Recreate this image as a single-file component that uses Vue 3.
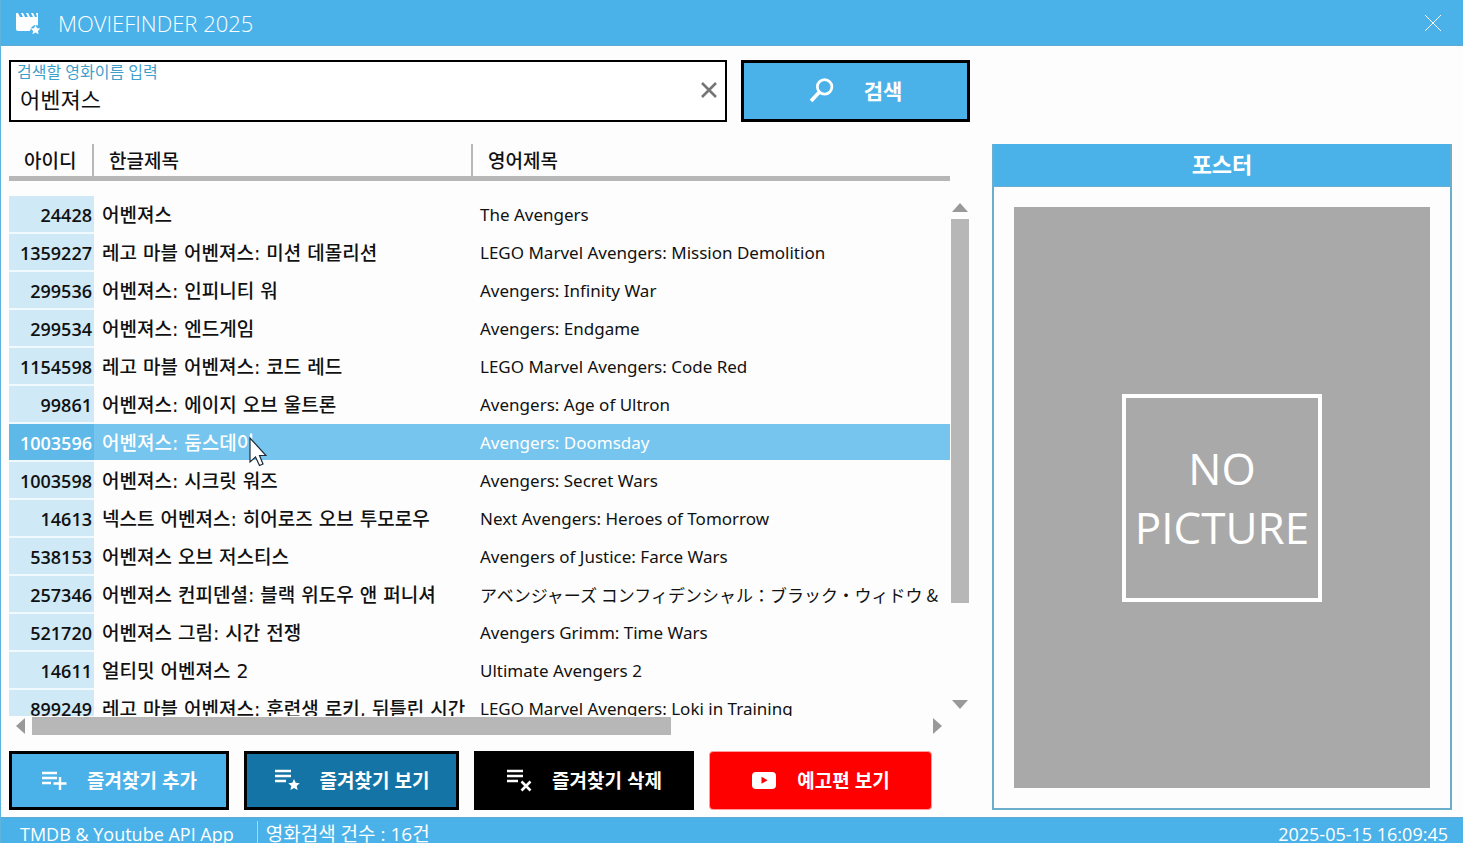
<script setup>
import { ref } from 'vue'

const query = ref('어벤져스')
const selected = ref(1003596)
const movies = [
  { id: 24428, ko: '어벤져스', en: 'The Avengers' },
  { id: 1359227, ko: '레고 마블 어벤져스: 미션 데몰리션', en: 'LEGO Marvel Avengers: Mission Demolition' },
  { id: 299536, ko: '어벤져스: 인피니티 워', en: 'Avengers: Infinity War' },
  { id: 299534, ko: '어벤져스: 엔드게임', en: 'Avengers: Endgame' },
  { id: 1154598, ko: '레고 마블 어벤져스: 코드 레드', en: 'LEGO Marvel Avengers: Code Red' },
  { id: 99861, ko: '어벤져스: 에이지 오브 울트론', en: 'Avengers: Age of Ultron' },
  { id: 1003596, ko: '어벤져스: 둠스데이', en: 'Avengers: Doomsday' },
  { id: 1003598, ko: '어벤져스: 시크릿 워즈', en: 'Avengers: Secret Wars' },
  { id: 14613, ko: '넥스트 어벤져스: 히어로즈 오브 투모로우', en: 'Next Avengers: Heroes of Tomorrow' },
  { id: 538153, ko: '어벤져스 오브 저스티스', en: 'Avengers of Justice: Farce Wars' },
  { id: 257346, ko: '어벤져스 컨피덴셜: 블랙 위도우 앤 퍼니셔', en: 'アベンジャーズ コンフィデンシャル：ブラック・ウィドウ &', ja: true },
  { id: 521720, ko: '어벤져스 그림: 시간 전쟁', en: 'Avengers Grimm: Time Wars' },
  { id: 14611, ko: '얼티밋 어벤져스 2', en: 'Ultimate Avengers 2' },
  { id: 899249, ko: '레고 마블 어벤져스: 훈련생 로키, 뒤틀린 시간', en: 'LEGO Marvel Avengers: Loki in Training' },
]
</script>

<template>
  <div class="window">
    <header class="titlebar">
      <svg class="logo" viewBox="0 0 26 24" aria-hidden="true">
        <path fill="#fff" d="M1 2h2l2 4h3L6 2h2l2 4h3l-2-4h2l2 4h3l-2-4h2l2 4h2l-1-4h2v12.5a6 6 0 0 0-8 5.500H3a2 2 0 0 1-2-2z" />
        <path fill="#fff" d="M20.500 14l1.500 3.200 3.400.4-2.500 2.300.7 3.400-3.100-1.700-3 1.700.6-3.400-2.500-2.300 3.400-.4z" />
      </svg>
      <h1>MOVIEFINDER 2025</h1>
      <button class="close" type="button" aria-label="닫기">
        <svg viewBox="0 0 16 16"><path d="M0 0L16 16M16 0L0 16" stroke="#fff" fill="none" /></svg>
      </button>
    </header>

    <main class="content">
      <form class="search" @submit.prevent>
        <div class="field">
          <label for="query">검색할 영화이름 입력</label>
          <input id="query" v-model="query" type="text" />
          <button class="clear" type="button" aria-label="지우기" @click="query = ''">
            <svg viewBox="0 0 16 16"><path d="M1 1L15 15M15 1L1 15" stroke="#757575" stroke-width="2.600" fill="none" /></svg>
          </button>
        </div>
        <button class="search-btn" type="submit">
          <svg viewBox="0 0 24 24" aria-hidden="true">
            <circle cx="15" cy="8.500" r="7" fill="none" stroke="#fff" stroke-width="2.600" />
            <path d="M10 13.500L2 22" stroke="#fff" stroke-width="3.600" />
          </svg>
          <span>검색</span>
        </button>
      </form>

      <section class="results">
        <div class="viewport">
          <table>
            <colgroup><col class="c-id" /><col class="c-ko" /><col /></colgroup>
            <thead>
              <tr><th scope="col">아이디</th><th scope="col">한글제목</th><th scope="col">영어제목</th></tr>
            </thead>
            <tbody>
              <tr v-for="m in movies" :key="m.id" :class="{ selected: m.id === selected }" @click="selected = m.id">
                <td class="id">{{ m.id }}</td>
                <td class="ko">
                  <span>{{ m.ko }}</span>
                  <svg v-if="m.id === 1003596" class="pointer" viewBox="0 0 18 30" aria-hidden="true">
                    <path d="M1 1v24l5.500-5 4 8.500 3.500-1.500-3.500-8.500h6.500z" fill="#fff" stroke="#1d2b3a" stroke-width="1.200" />
                  </svg>
                </td>
                <td class="en" :class="{ ja: m.ja }">{{ m.en }}</td>
              </tr>
            </tbody>
          </table>
        </div>
        <div class="vbar">
          <svg viewBox="0 0 16 9"><path d="M8 0l8 9H0z" /></svg>
          <div class="track"><div class="thumb"></div></div>
          <svg viewBox="0 0 16 9"><path d="M8 9l8-9H0z" /></svg>
        </div>
        <div class="hbar">
          <svg viewBox="0 0 9 16"><path d="M0 8l9-8v16z" /></svg>
          <div class="track"><div class="thumb"></div></div>
          <svg viewBox="0 0 9 16"><path d="M9 8L0 0v16z" /></svg>
        </div>
      </section>

      <nav class="actions">
        <button class="add" type="button">
          <svg viewBox="0 0 26 24" aria-hidden="true">
            <path d="M1 5h15M1 10h15M1 15h9M19 9v13M12.500 15.500h13" stroke="#fff" stroke-width="2.400" fill="none" />
          </svg>
          <span>즐겨찾기 추가</span>
        </button>
        <button class="view" type="button">
          <svg viewBox="0 0 26 24" aria-hidden="true">
            <path d="M1 3h16M1 8h16M1 13h11" stroke="#fff" stroke-width="2.400" fill="none" />
            <path fill="#fff" d="M20 11l1.700 3.800 4 .4-3 2.700.9 4.100-3.600-2.100-3.600 2.100.9-4.100-3-2.700 4-.4z" />
          </svg>
          <span>즐겨찾기 보기</span>
        </button>
        <button class="remove" type="button">
          <svg viewBox="0 0 26 24" aria-hidden="true">
            <path d="M1 3h16M1 8h16M1 13h11" stroke="#fff" stroke-width="2.400" fill="none" />
            <path d="M15.500 13.500l9 9M24.500 13.500l-9 9" stroke="#fff" stroke-width="2.600" fill="none" />
          </svg>
          <span>즐겨찾기 삭제</span>
        </button>
        <button class="trailer" type="button">
          <svg viewBox="0 0 26 24" aria-hidden="true">
            <rect x="1" y="4" width="24" height="17" rx="4" fill="#fff" />
            <path d="M10.500 8.800v7l6-3.500z" fill="#f00" />
          </svg>
          <span>예고편 보기</span>
        </button>
      </nav>

      <aside class="poster">
        <h2>포스터</h2>
        <div class="canvas">
          <p class="placeholder">NO<br />PICTURE</p>
        </div>
      </aside>
    </main>

    <footer class="statusbar">
      <span class="app">TMDB &amp; Youtube API App</span>
      <span class="count">영화검색 건수 : 16건</span>
      <time datetime="2025-05-15T16:09:45">2025-05-15 16:09:45</time>
    </footer>
  </div>
</template>

<style>
body {
  background: #fdfdfd;
}
</style>

<style scoped>
.window {
  --blue: #4ab2e8;
  --gray: #b7b7b7;
  box-sizing: border-box;
  display: flex;
  flex-direction: column;
  height: 100vh;
  overflow: hidden;
  border-left: 1px solid #5fb4dd;
  background: #fdfdfd;
  color: #111;
  font-family: 'Open Sans', 'Noto Sans CJK KR', sans-serif;
  font-size: 18px;
}
.window *,
.window *::before {
  box-sizing: border-box;
}
h1, h2, p {
  margin: 0;
}
button {
  font: inherit;
  padding: 0;
  border: 0;
  background: none;
  color: inherit;
}
.titlebar {
  flex: none;
  display: flex;
  align-items: center;
  height: 46px;
  padding: 0 22px 0 14px;
  background: var(--blue);
  border-bottom: 1px solid #62a9d2;
  color: #fff;
}
.logo {
  width: 26px;
  height: 24px;
  margin-right: 17px;
}
h1 {
  font-size: 22px;
  font-weight: 300;
  line-height: 44px;
}
.close {
  display: flex;
  margin-left: auto;
}
.close svg {
  width: 16px;
  height: 16px;
}
.content {
  flex: 1;
  min-height: 0;
  display: grid;
  grid-template-columns: minmax(0, 1fr) 460px;
  grid-template-rows: 62px minmax(0, 1fr) 59px;
  column-gap: 22px;
  padding: 14px 11px 7px 8px;
}
.search,
.results,
.actions {
  grid-column: 1;
}
.search {
  display: flex;
  gap: 14px;
}
.field {
  position: relative;
  flex: 1;
  display: flex;
  flex-direction: column;
  border: 2px solid #000;
  background: #fff;
}
.field label {
  padding: 0 6px;
  color: #3f9fcb;
  font-size: 16px;
  line-height: 20px;
}
.field input {
  flex: 1;
  min-height: 0;
  padding: 0 40px 6px 9px;
  border: 0;
  outline: 0;
  background: none;
  color: #111;
  font-family: inherit;
  font-size: 22px;
}
.clear {
  position: absolute;
  right: 8px;
  top: 20px;
  display: flex;
}
.clear svg {
  width: 16px;
  height: 16px;
}
.search-btn {
  flex: none;
  display: flex;
  align-items: center;
  justify-content: center;
  gap: 30px;
  width: 229px;
  padding-bottom: 2px;
  border: 3px solid #000;
  background: var(--blue);
  color: #fff;
  font-size: 21px;
  font-weight: 700;
}
.search-btn svg {
  width: 25px;
  height: 25px;
}
.results {
  display: grid;
  grid-template-columns: minmax(0, 1fr) 18px;
  grid-template-rows: minmax(0, 1fr) 18px;
  gap: 1px;
  min-height: 0;
  padding: 22px 1px 16px 0;
}
.viewport {
  overflow: hidden;
}
table {
  width: 100%;
  table-layout: fixed;
  border-collapse: separate;
  border-spacing: 0;
}
.c-id {
  width: 85px;
}
.c-ko {
  width: 379px;
}
th {
  height: 37px;
  padding: 2px 0 0 15px;
  border-bottom: 5px solid var(--gray);
  border-right: 2px solid var(--gray);
  font-size: 19px;
  font-weight: 500;
  line-height: 30px;
  text-align: left;
}
th:last-child {
  border-right: 0;
}
tbody::before {
  content: '';
  display: block;
  height: 15px;
}
td {
  height: 38px;
  padding: 2px 0 0;
  border-bottom: 2px solid #fdfdfd;
  line-height: 34px;
  white-space: nowrap;
}
.id {
  padding-right: 2px;
  background: #cfe9f6;
  border-color: #f0f9fd;
  font-weight: 600;
  text-align: right;
}
.ko {
  position: relative;
  padding-left: 8px;
  font-family: 'DejaVu Sans', 'Noto Sans CJK KR', sans-serif;
  font-size: 19px;
  font-weight: 500;
}
.en {
  padding-left: 7px;
  overflow: hidden;
  font-family: 'Noto Sans', sans-serif;
  font-size: 17px;
}
.ja {
  font-family: 'Noto Sans CJK JP', sans-serif;
}
.selected td {
  background: #76c5ee;
  color: #fff;
}
.selected .id {
  background: #5eb9e8;
}
.pointer {
  position: absolute;
  left: 155px;
  top: 13px;
  width: 18px;
  height: 30px;
  z-index: 1;
}
.vbar {
  display: flex;
  flex-direction: column;
  align-items: center;
  gap: 7px;
  padding: 59px 0 7px;
}
.vbar svg {
  width: 16px;
  height: 9px;
  fill: #999;
}
.track {
  flex: 1;
}
.thumb {
  background: var(--gray);
}
.vbar .track {
  width: 18px;
}
.vbar .thumb {
  height: 81%;
}
.hbar {
  display: flex;
  align-items: center;
  gap: 7px;
  padding: 0 8px 0 7px;
}
.hbar svg {
  width: 9px;
  height: 16px;
  fill: #999;
}
.hbar .thumb {
  width: 71.5%;
  height: 18px;
}
.actions {
  display: flex;
  gap: 15px;
}
.actions button {
  display: flex;
  align-items: center;
  justify-content: center;
  gap: 20px;
  width: 220px;
  padding-bottom: 2px;
  border: 3px solid #000;
  color: #fff;
  font-size: 19px;
  font-weight: 700;
}
.actions svg {
  width: 26px;
  height: 24px;
}
.actions .add {
  background: var(--blue);
}
.actions .view {
  width: 215px;
  background: #1374a5;
}
.actions .remove {
  background: #000;
}
.actions .trailer {
  width: 223px;
  border: 1px solid #ff9d9d;
  border-radius: 4px;
  background: #f00;
}
.poster {
  grid-column: 2;
  grid-row: 2 / 4;
  display: flex;
  flex-direction: column;
  margin-top: 22px;
  border: 2px solid #6aaecb;
  border-top: 0;
}
h2 {
  height: 43px;
  border-bottom: 1px solid #6aaecb;
  background: var(--blue);
  color: #fff;
  font-size: 22px;
  font-weight: 700;
  line-height: 41px;
  text-align: center;
}
.canvas {
  flex: 1;
  display: flex;
  align-items: center;
  justify-content: center;
  margin: 20px;
  background: #a9a9a9;
}
.placeholder {
  padding: 41px 0;
  width: 200px;
  border: 4px solid #fff;
  color: #fff;
  font-size: 44px;
  line-height: 59px;
  text-align: center;
}
.statusbar {
  flex: none;
  display: flex;
  align-items: flex-start;
  height: 26px;
  padding: 0 15px 0 19px;
  border-top: 1px solid #62a9d2;
  overflow: hidden;
  background: var(--blue);
  color: #fff;
  line-height: 32px;
}
.count {
  margin: 3px 0 0 23px;
  padding-left: 8px;
  border-left: 1px solid #a5d9f4;
  font-size: 19px;
  line-height: 26px;
}
time {
  margin-left: auto;
}
</style>
